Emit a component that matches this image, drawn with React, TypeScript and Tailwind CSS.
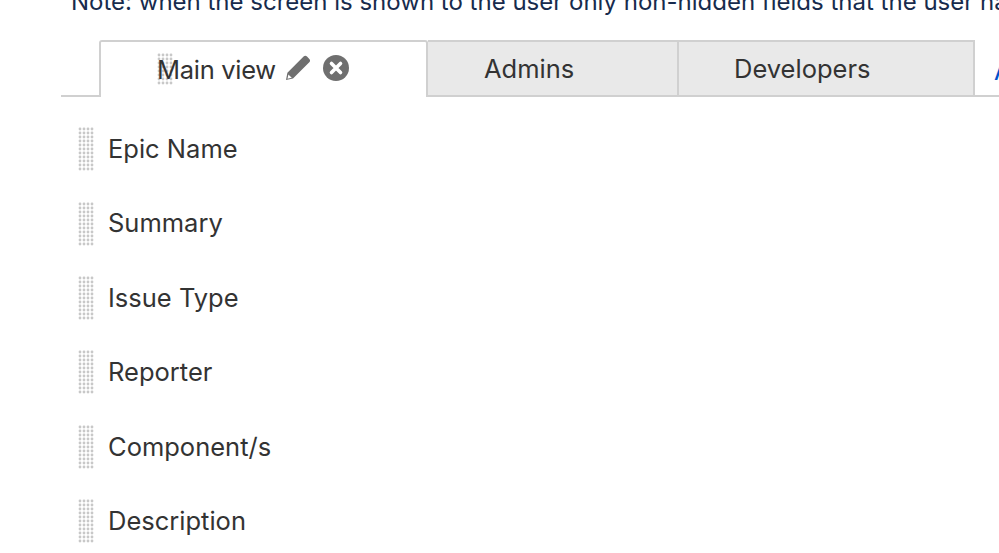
const fields = ["Epic Name", "Summary", "Issue Type", "Reporter", "Component/s", "Description"];

const Grip = ({ className, rows = 11 }: { className: string; rows?: number }) => {
  const dots = [];
  for (let r = 0; r < rows; r++) {
    for (let c = 0; c < 4; c++) {
      dots.push(<rect key={`${r}-${c}`} x={c * 4 + 0.6} y={r * 4 + 0.6} width="2.8" height="2.8" rx="1.4" fill="#c8c8c8" />);
    }
  }
  return (
    <svg className={className} width="16" height={rows * 4} viewBox={`0 0 16 ${rows * 4}`}>
      {dots}
    </svg>
  );
};

const App = () => {
  return (
    <div className="w-[999px] h-[553px] overflow-hidden bg-white font-['Inter',sans-serif] text-[25.5px] text-[#333333]">
      <p className="h-[26px] pl-[71px] -mt-[14px] mb-[28px] whitespace-nowrap leading-[32px] text-[#172b4d] text-[24px]">
        Note: when the screen is shown to the user only non-hidden fields that the user has
      </p>

      <div className="flex ml-[61px] h-[57px] border-b-2 border-[#d0d0d0]">
        <div className="w-[38px] shrink-0" />
        <div className="relative shrink-0 w-[329px] h-[57px] bg-white border-2 border-b-0 border-[#d0d0d0] rounded-t-[3px] flex items-center pl-[56px] pt-[1px]">
          <Grip className="absolute left-[56px] top-[11px]" rows={8} />
          <span className="relative tracking-[-0.3px]">Main view</span>
          <svg className="ml-[9px] -mt-[5px]" width="26" height="26" viewBox="0 0 26 26">
            <path d="M18.6 1.6c1-1 2.4-1 3.4 0l2.3 2.3c1 1 1 2.4 0 3.4L8 23.4 1 25l1.4-7.2z" fill="#6f6f6f" />
            <path d="M3.4 19.5l3.4 3.2-4.3 1z" fill="#ffffff" />
          </svg>
          <svg className="ml-[12px] -mt-[5px]" width="26" height="26" viewBox="0 0 26 26">
            <circle cx="13" cy="13" r="13" fill="#6f6f6f" />
            <path d="M8.5 8.5l9 9M17.5 8.5l-9 9" stroke="#ffffff" strokeWidth="3.6" strokeLinecap="round" />
          </svg>
        </div>
        <div className="shrink-0 w-[251px] h-[55px] bg-[#e9e9e9] border-t-2 border-r-2 border-[#d0d0d0] flex items-center pl-[56px] pt-[2px]">
          Admins
        </div>
        <div className="shrink-0 w-[296px] h-[55px] bg-[#e9e9e9] border-t-2 border-r-2 border-[#d0d0d0] flex items-center pl-[55px] pt-[2px]">
          Developers
        </div>
        <div className="shrink-0 pl-[19px] pt-[12px] text-[#0052cc] whitespace-nowrap">Add tab</div>
      </div>

      <ul className="pl-[78px] pt-[15px]">
        {fields.map((name) => (
          <li key={name} className="flex items-center h-[74.4px]">
            <Grip className="shrink-0" />
            <span className="ml-[14px]">{name}</span>
          </li>
        ))}
      </ul>
    </div>
  );
};

export default App;
